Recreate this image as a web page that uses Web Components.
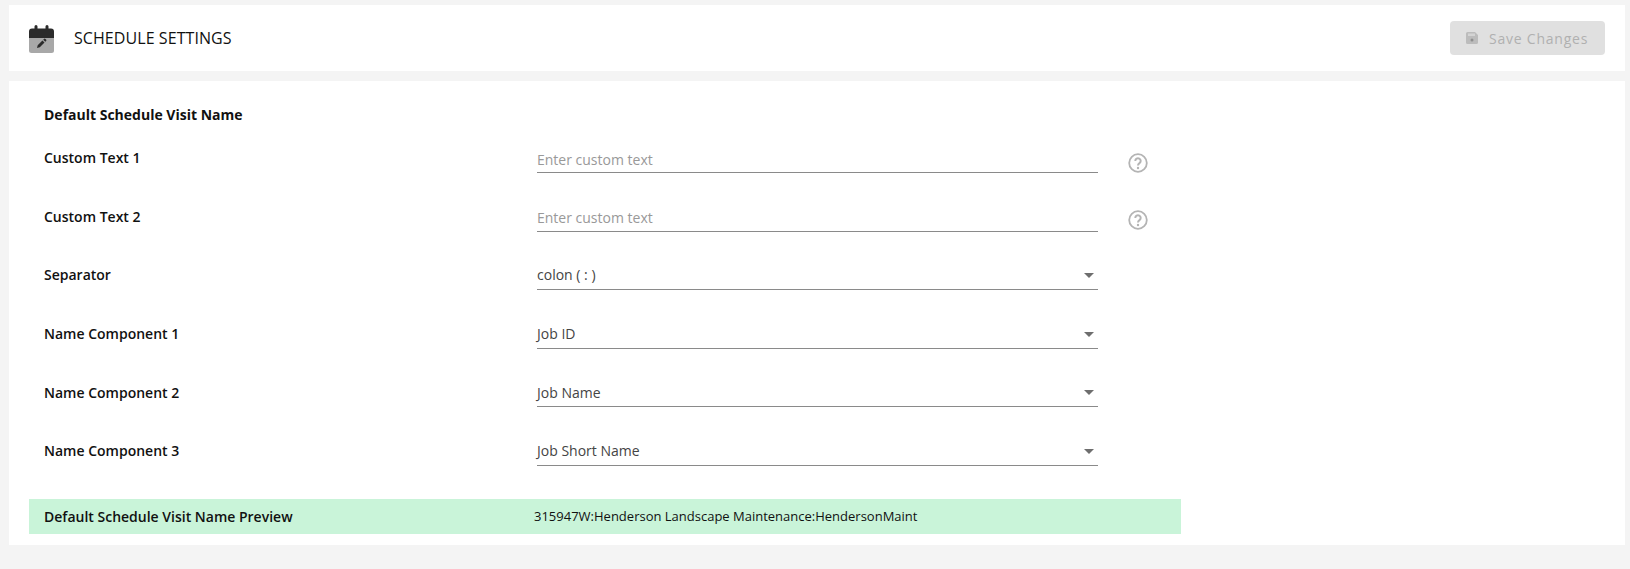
<!DOCTYPE html>
<html lang="en"><head><meta charset="utf-8"><title>Schedule Settings</title>
<style>
html,body{margin:0;padding:0;height:100%}
body{background:#f4f4f4;font-family:"Open Sans","Noto Sans",sans-serif;color:#111;overflow:hidden}
</style></head><body>
<settings-page>
  <settings-header title-text="SCHEDULE SETTINGS"></settings-header>
  <settings-card heading="Default Schedule Visit Name">
    <field-row label="Custom Text 1" placeholder="Enter custom text" help style="--help-top:19px"></field-row>
    <field-row label="Custom Text 2" placeholder="Enter custom text" help style="--help-top:17.400px"></field-row>
    <field-row label="Separator" value="colon ( : )" select></field-row>
    <field-row label="Name Component 1" value="Job ID" select></field-row>
    <field-row label="Name Component 2" value="Job Name" select></field-row>
    <field-row label="Name Component 3" value="Job Short Name" select></field-row>
    <preview-bar slot="preview" label="Default Schedule Visit Name Preview" value="315947W:Henderson Landscape Maintenance:HendersonMaint"></preview-bar>
  </settings-card>
</settings-page>
<script>
const def=(n,html,init)=>customElements.define(n,class extends HTMLElement{
  connectedCallback(){ if(this.shadowRoot)return; const r=this.attachShadow({mode:'open'}); r.innerHTML=html; if(init)init(this,r);}
});
def('settings-page',`<style>:host{display:flex;flex-direction:column;gap:10px;padding:5px 5px 0 9px}</style><slot></slot>`);
def('settings-header',`<style>
:host{display:flex;align-items:center;height:66px;background:#fff;padding:0 20px 0 20px;box-sizing:border-box}
svg{width:25px;height:30px;display:block;margin-right:20px;flex:none}
.t{font-size:16px;font-weight:500;letter-spacing:.07px;color:#111;flex:1;padding-bottom:1px}
button{display:flex;align-items:center;width:155px;height:34px;border:0;border-radius:4px;background:#e0e0e0;color:#b0b0b0;font:500 14px "Open Sans",sans-serif;letter-spacing:.055em;padding:0 0 0 16px;box-sizing:border-box;white-space:nowrap}
button svg{width:12px;height:12px;margin-right:11px}
</style>
<svg viewBox="0 0 25 30"><rect x="0" y="8" width="25" height="22" rx="2.500" fill="#a8a8a8"/><path d="M0 15V8.500A3 3 0 0 1 3 5.500H5.500V3.500a1.500 1.500 0 0 1 3 0V5.500H16.500V3.500a1.500 1.500 0 0 1 3 0V5.500H22a3 3 0 0 1 3 3V15Z" fill="#2b2b2b"/><path d="M8 25l.7-2.800 4.700-4.700 2.100 2.100L10.800 24.300Z M14.200 16.700l.8-.8a1 1 0 0 1 1.400 0l.7.700a1 1 0 0 1 0 1.400l-.8.800Z" fill="#2b2b2b"/></svg>
<div class="t"></div>
<button disabled><svg viewBox="0 0 12 12"><path d="M1.500 0H9l3 3v7.500A1.500 1.500 0 0 1 10.500 12h-9A1.500 1.500 0 0 1 0 10.500v-9A1.500 1.500 0 0 1 1.500 0Z" fill="#bcbcbc"/><rect x="2" y="1.500" width="7" height="2.500" fill="#d4d4d4"/><circle cx="6" cy="8" r="1.500" fill="#8f8f8f"/></svg>Save Changes</button>`,
(h,r)=>{r.querySelector('.t').textContent=h.getAttribute('title-text')});
def('settings-card',`<style>
:host{display:block;background:#fff;height:464px;box-sizing:border-box;padding:24px 20px 0 20px}
h2{margin:0 0 0 15px;font-size:14px;line-height:19px;font-weight:700;color:#111}
.rows{display:flex;flex-direction:column;margin-top:10px}
.p{display:block;margin-top:13px}
</style><h2></h2><div class="rows"><slot></slot></div><div class="p"><slot name="preview"></slot></div>`,
(h,r)=>{r.querySelector('h2').textContent=h.getAttribute('heading')});
def('field-row',`<style>
:host{display:grid;grid-template-columns:493px 561px 1fr;height:58.6px;box-sizing:border-box;padding-left:15px;font-size:14px}
.l{font-weight:600;color:#111;line-height:19px;padding-top:14.300px}
.f{position:relative;margin-top:4px;border-bottom:1px solid #8a8a8a;line-height:19px;padding-top:10.200px;color:#444;height:23.800px}
.f.ph{color:#999;padding-top:11.700px;height:22.300px}
.a{position:absolute;right:4px;top:18px;width:0;height:0;border:5px solid transparent;border-top:5px solid #6e6e6e;border-bottom:0}
svg{width:20px;height:20px;margin:var(--help-top,18.400px) 0 0 30px;display:block}
</style><div class="l"></div><div class="f"></div>`,
(h,r)=>{
 r.querySelector('.l').textContent=h.getAttribute('label');
 const f=r.querySelector('.f');
 if(h.hasAttribute('placeholder')){f.textContent=h.getAttribute('placeholder');f.classList.add('ph')}
 else f.textContent=h.getAttribute('value');
 if(h.hasAttribute('select')){const a=document.createElement('span');a.className='a';f.append(a)}
 if(h.hasAttribute('help')){const t=document.createElement('template');
  t.innerHTML='<svg viewBox="0 0 20 20"><circle cx="10" cy="10" r="8.800" fill="none" stroke="#b4b4b4" stroke-width="1.800"/><path d="M7.300 8a2.700 2.700 0 1 1 4.200 2.200c-1 .7-1.500 1.100-1.500 2.300" fill="none" stroke="#b4b4b4" stroke-width="2"/><circle cx="10" cy="15" r="1.200" fill="#b4b4b4"/></svg>';
  r.append(t.content)}
});
def('preview-bar',`<style>
:host{display:grid;grid-template-columns:490px 1fr;width:1152px;height:35px;align-items:center;background:#c9f4d9;padding-left:15px;box-sizing:border-box;font-size:14px;color:#111}
.l{font-weight:600}.v{font-size:13px}
</style><div class="l"></div><div class="v"></div>`,
(h,r)=>{r.querySelector('.l').textContent=h.getAttribute('label');r.querySelector('.v').textContent=h.getAttribute('value')});
</script>
</body></html>
